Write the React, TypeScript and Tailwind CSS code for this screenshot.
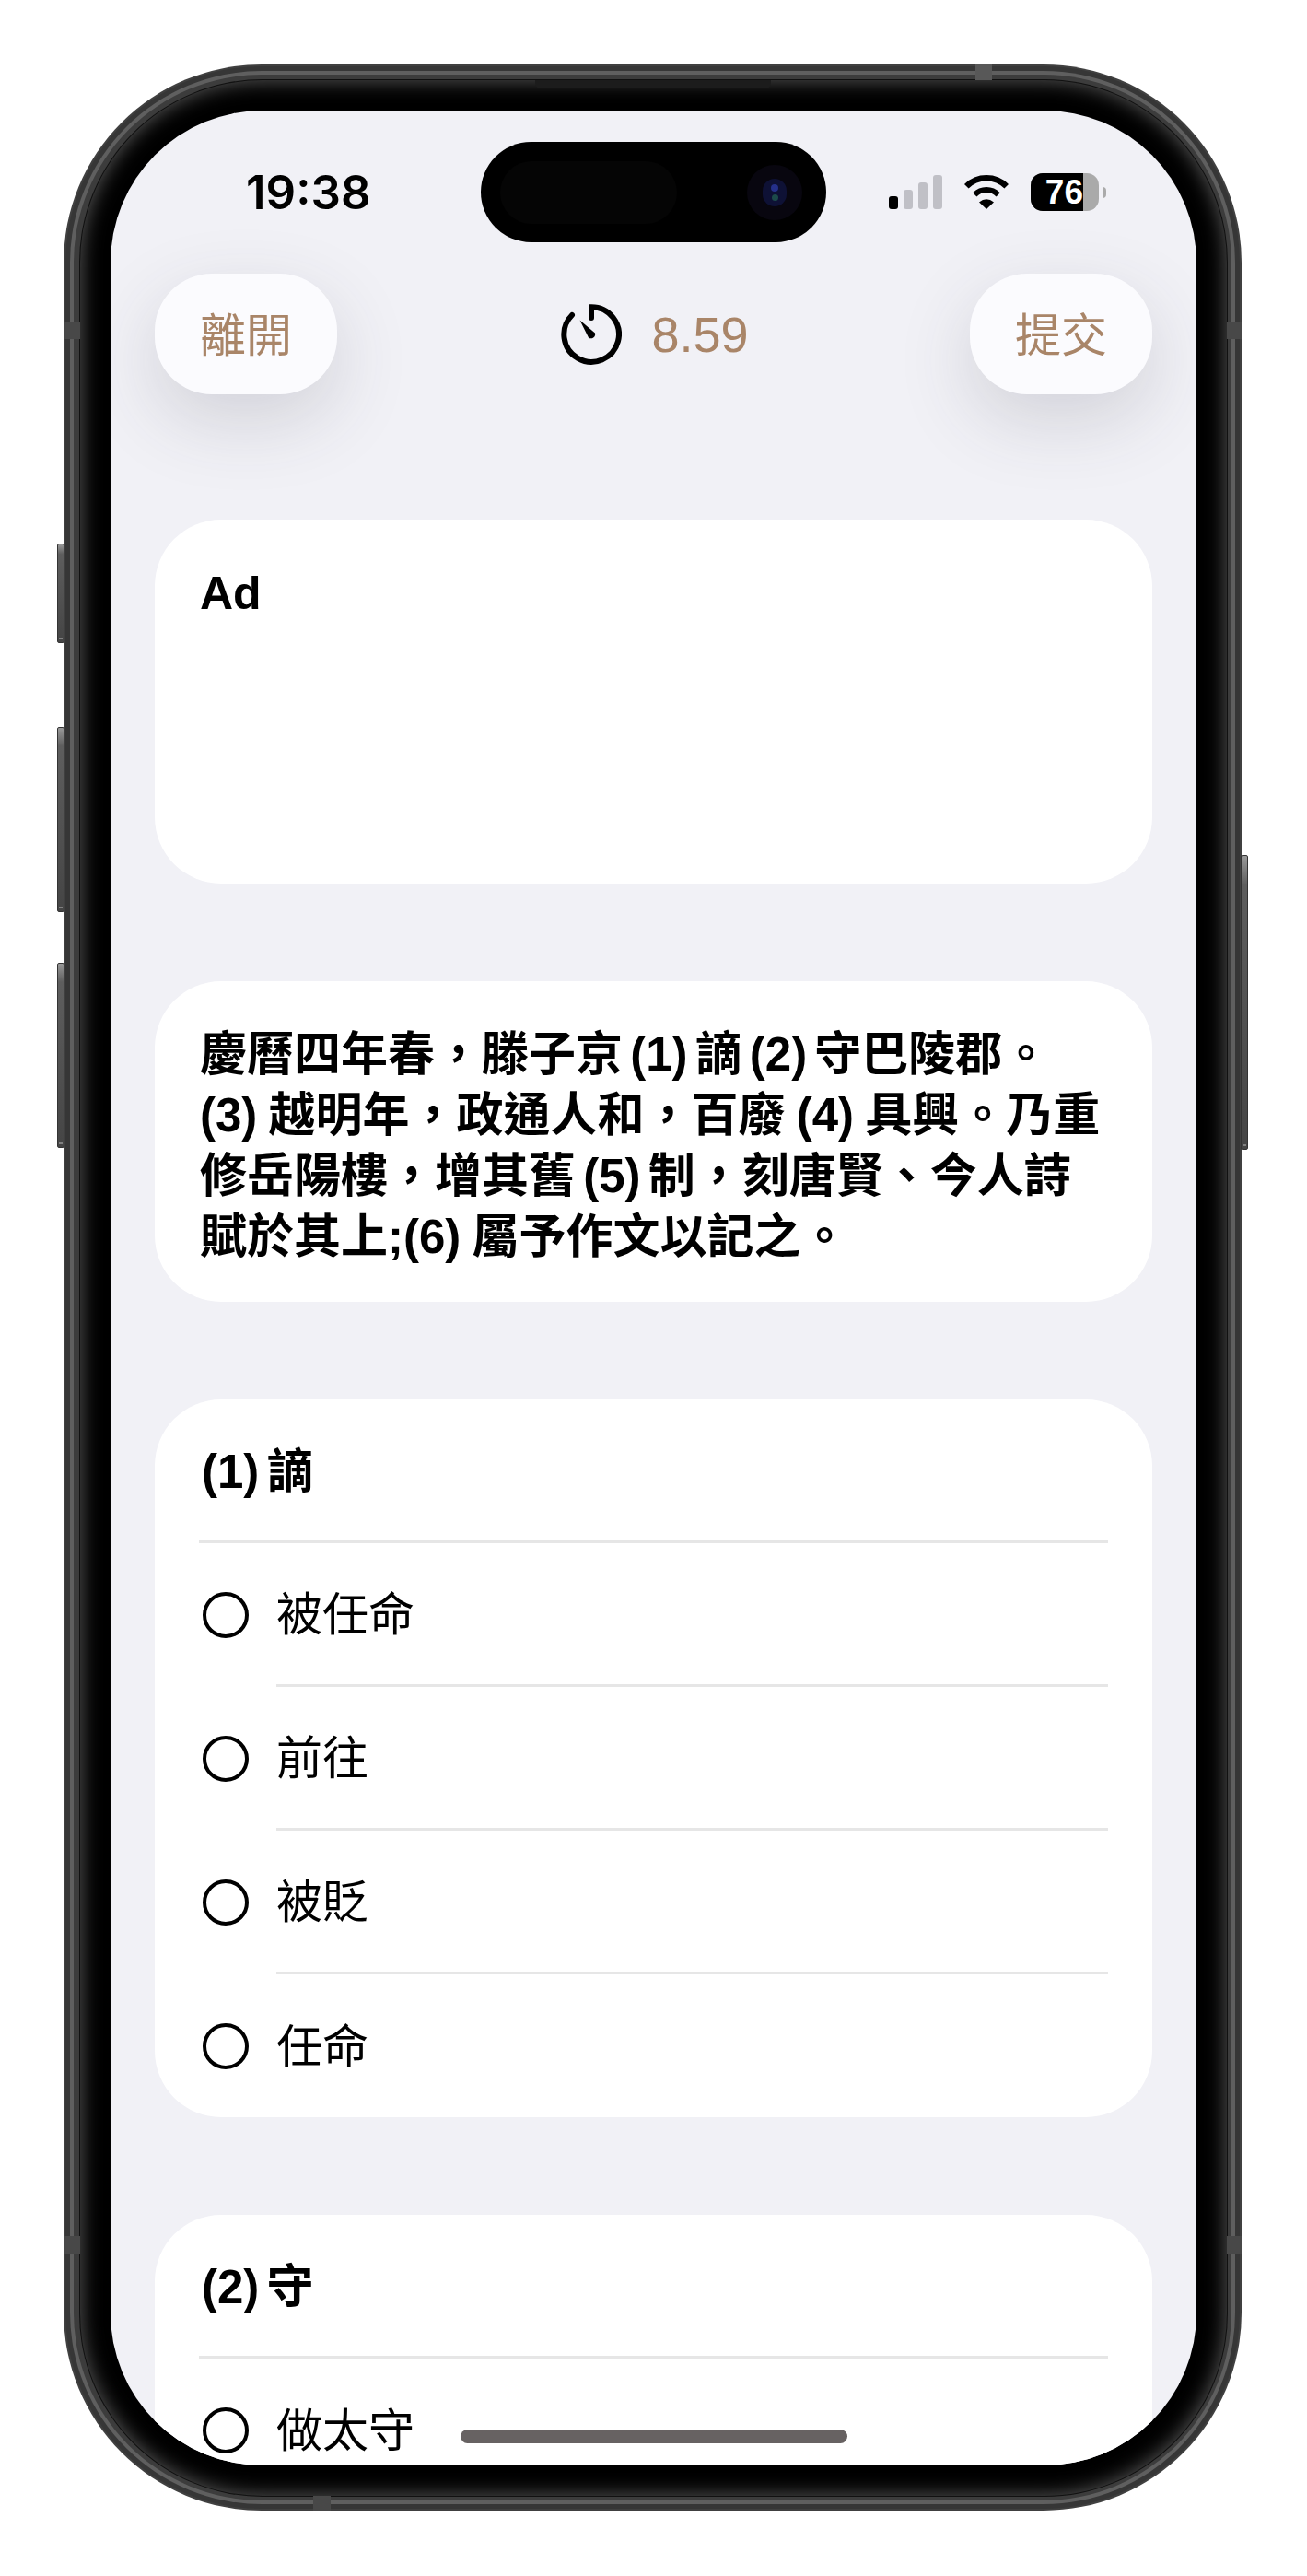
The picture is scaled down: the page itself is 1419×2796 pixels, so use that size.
const sans = "font-['Liberation_Sans','Noto_Sans_CJK_TC',sans-serif]"

const passage = [
  { text: '慶曆四年春，滕子京 (1) 謫 (2) 守巴陵郡。', spacing: '[word-spacing:-6px]' },
  { text: '(3) 越明年，政通人和，百廢 (4) 具興。乃重', spacing: '[word-spacing:-2px]' },
  { text: '修岳陽樓，增其舊 (5) 制，刻唐賢、今人詩', spacing: '[word-spacing:-6px]' },
  { text: '賦於其上;(6) 屬予作文以記之。', spacing: '[word-spacing:-2px]' },
]

const questions = [
  { title: '(1) 謫', options: ['被任命', '前往', '被貶', '任命'] },
  { title: '(2) 守', options: ['做太守'] },
]

function SideButton({ className }: { className: string }) {
  return (
    <div className={`absolute w-[8px] rounded-[2px] border border-[#333333] bg-gradient-to-b from-[#9a9a9a] from-[0%] via-[#5e5e5e] via-[10%] to-[#454545] ${className}`}>
      <div className="absolute bottom-[3px] left-[1px] right-[1px] h-[2px] bg-[#808080]" />
    </div>
  )
}

function Signal() {
  return (
    <div className="flex items-end gap-[6px]">
      <div className="h-[14px] w-[10px] rounded-[3px] bg-black" />
      <div className="h-[21px] w-[10px] rounded-[3px] bg-[#c0c0c6]" />
      <div className="h-[29px] w-[10px] rounded-[3px] bg-[#c0c0c6]" />
      <div className="h-[37px] w-[10px] rounded-[3px] bg-[#c0c0c6]" />
    </div>
  )
}

function Wifi() {
  return (
    <svg width="50" height="37" viewBox="0 0 50 37" fill="none">
      <path d="M3.3 12.3A30.7 30.7 0 0 1 46.7 12.3" stroke="#000" strokeWidth="6.5" />
      <path d="M12.3 21.3A18 18 0 0 1 37.7 21.3" stroke="#000" strokeWidth="6" />
      <path d="M25 37L17 29.5Q25 23 33 29.5Z" fill="#000" />
    </svg>
  )
}

function Battery() {
  return (
    <div className="flex items-center gap-[4px]">
      <div className="flex h-[41px] w-[74px] overflow-hidden rounded-[13px] bg-[#aaaaaa]">
        <div className="flex h-full w-[57px] items-center justify-end overflow-hidden bg-black">
          <span className={`${sans} text-[37px] font-bold leading-none text-white`}>76</span>
        </div>
      </div>
      <div className="h-[12px] w-[4px] rounded-r-full bg-[#aaaaaa]" />
    </div>
  )
}

function TimerIcon() {
  return (
    <svg width="66" height="66" viewBox="0 0 66 66" fill="none">
      <path d="M33 15V3.2A29.8 29.8 0 1 1 12 12" stroke="#000" strokeWidth="6" strokeLinecap="round" />
      <path d="M20.5 17.5L37 31.5A4.6 4.6 0 0 1 30 36.5Z" fill="#000" />
    </svg>
  )
}

function PillButton({ label }: { label: string }) {
  return (
    <button className={`${sans} flex h-[131px] w-[198px] items-center justify-center rounded-[62px] bg-[#fbfbfe] pt-[5px] text-[50px] leading-none text-[#a98568] shadow-[0_28px_80px_rgba(60,60,80,0.17)]`}>
      {label}
    </button>
  )
}

function Question({ title, options }: { title: string; options: string[] }) {
  return (
    <div className="rounded-[72px] bg-white">
      <div className="mx-[48px] flex h-[156px] items-center border-b-[3px] border-[#e6e6e6] pl-[3px] pt-[4px]">
        <span className="text-[51px] font-bold leading-none text-black [word-spacing:-6px]">{title}</span>
      </div>
      {options.map((opt, i) => {
        const last = i === options.length - 1
        return (
          <div key={opt} className="ml-[52px] mr-[48px] flex items-center gap-[30px]">
            <div className="h-[50px] w-[50px] shrink-0 rounded-full border-[4px] border-black" />
            <div className={`flex flex-1 items-center pt-[3px] text-[50px] leading-none text-black ${last ? 'h-[155px]' : 'h-[156px] border-b-[3px] border-[#e6e6e6]'}`}>
              {opt}
            </div>
          </div>
        )
      })}
    </div>
  )
}

export default function App() {
  return (
    <div className={`${sans} h-[2796px] w-[1419px] overflow-hidden bg-white pl-[69px] pt-[70px]`}>
      <div className="relative h-[2655px] w-[1279px]">
        <SideButton className="-left-[7px] top-[520px] h-[108px]" />
        <SideButton className="-left-[7px] top-[719px] h-[201px]" />
        <SideButton className="-left-[7px] top-[975px] h-[201px]" />
        <SideButton className="-right-[7px] top-[858px] h-[320px]" />

        <div className="h-full rounded-[215px] bg-[#404040] p-[2px]">
          <div className="h-full rounded-[213px] bg-[#363636] p-[5px]">
            <div className="h-full rounded-[208px] bg-[#5f5f5f] p-[4px]">
              <div className="h-full rounded-[204px] bg-[#3c3c3c] pb-[4px] pl-[6px] pr-[4px] pt-[5px]">
                <div className="h-full rounded-[199px] bg-[#111111] p-[1px]">
                  <div className="h-full rounded-[198px] bg-black p-[33px] shadow-[inset_0_0_22px_rgba(105,105,105,0.9)]">
                    <div className="relative h-[2556px] w-[1179px] overflow-hidden rounded-[165px] bg-[#f1f1f6]">
                      <div className="flex h-[177px] items-center justify-between pl-[147px] pr-[98px]">
                        <span className="font-['Inter'] text-[51px] font-semibold leading-none text-black">19:38</span>
                        <div className="flex items-center gap-[23px]">
                          <Signal />
                          <Wifi />
                          <Battery />
                        </div>
                      </div>

                      <div className="flex h-[131px] items-center justify-between px-[48px]">
                        <PillButton label="離開" />
                        <div className="ml-[3px] flex items-center gap-[32px]">
                          <TimerIcon />
                          <span className="text-[54px] leading-none text-[#a98568]">8.59</span>
                        </div>
                        <PillButton label="提交" />
                      </div>

                      <div className="mt-[136px] flex flex-col gap-[106px] px-[48px]">
                        <div className="h-[395px] rounded-[72px] bg-white px-[49px] pt-[55px]">
                          <span className="text-[50px] font-bold leading-none text-black">Ad</span>
                        </div>
                        <div className="h-[348px] rounded-[72px] bg-white px-[49px] pt-[47px] text-[51px] font-bold leading-[66px] text-black">
                          {passage.map((line) => (
                            <div key={line.text} className={`whitespace-nowrap ${line.spacing}`}>{line.text}</div>
                          ))}
                        </div>
                        {questions.map((q) => (
                          <Question key={q.title} title={q.title} options={q.options} />
                        ))}
                      </div>

                      <div className="absolute left-[402px] top-[34px] flex h-[109px] w-[375px] items-center justify-between rounded-full bg-black pl-[21px] pr-[26px]">
                        <div className="h-[68px] w-[192px] rounded-full bg-[#050505]" />
                        <div className="flex h-[60px] w-[60px] items-center justify-center rounded-full bg-[#08060f]">
                          <div className="flex h-[30px] w-[26px] flex-col items-center justify-center gap-[3px] rounded-full bg-[#0e1135]">
                            <div className="h-[8px] w-[8px] rounded-full bg-[#25308a]" />
                            <div className="h-[7px] w-[7px] rounded-full bg-[#1c4a4a]" />
                          </div>
                        </div>
                      </div>

                      <div className="absolute bottom-[24px] left-[380px] h-[15px] w-[420px] rounded-full bg-[#676262]" />
                    </div>
                  </div>
                </div>
              </div>
            </div>
          </div>
        </div>

        {/* antenna bands and speaker sit over the frame */}
        <div className="absolute left-[512px] top-[17px] h-[9px] w-[256px] rounded-b-[6px] bg-[#1c1c1c]" />
        <div className="absolute left-[990px] top-0 h-[17px] w-[18px] bg-[#585858]" />
        <div className="absolute left-0 top-[279px] h-[19px] w-[18px] bg-[#484848]" />
        <div className="absolute right-0 top-[279px] h-[19px] w-[16px] bg-[#484848]" />
        <div className="absolute bottom-[279px] left-0 h-[19px] w-[18px] bg-[#484848]" />
        <div className="absolute bottom-[279px] right-0 h-[19px] w-[16px] bg-[#484848]" />
        <div className="absolute bottom-0 left-[271px] h-[16px] w-[19px] bg-[#484848]" />
      </div>
    </div>
  )
}
